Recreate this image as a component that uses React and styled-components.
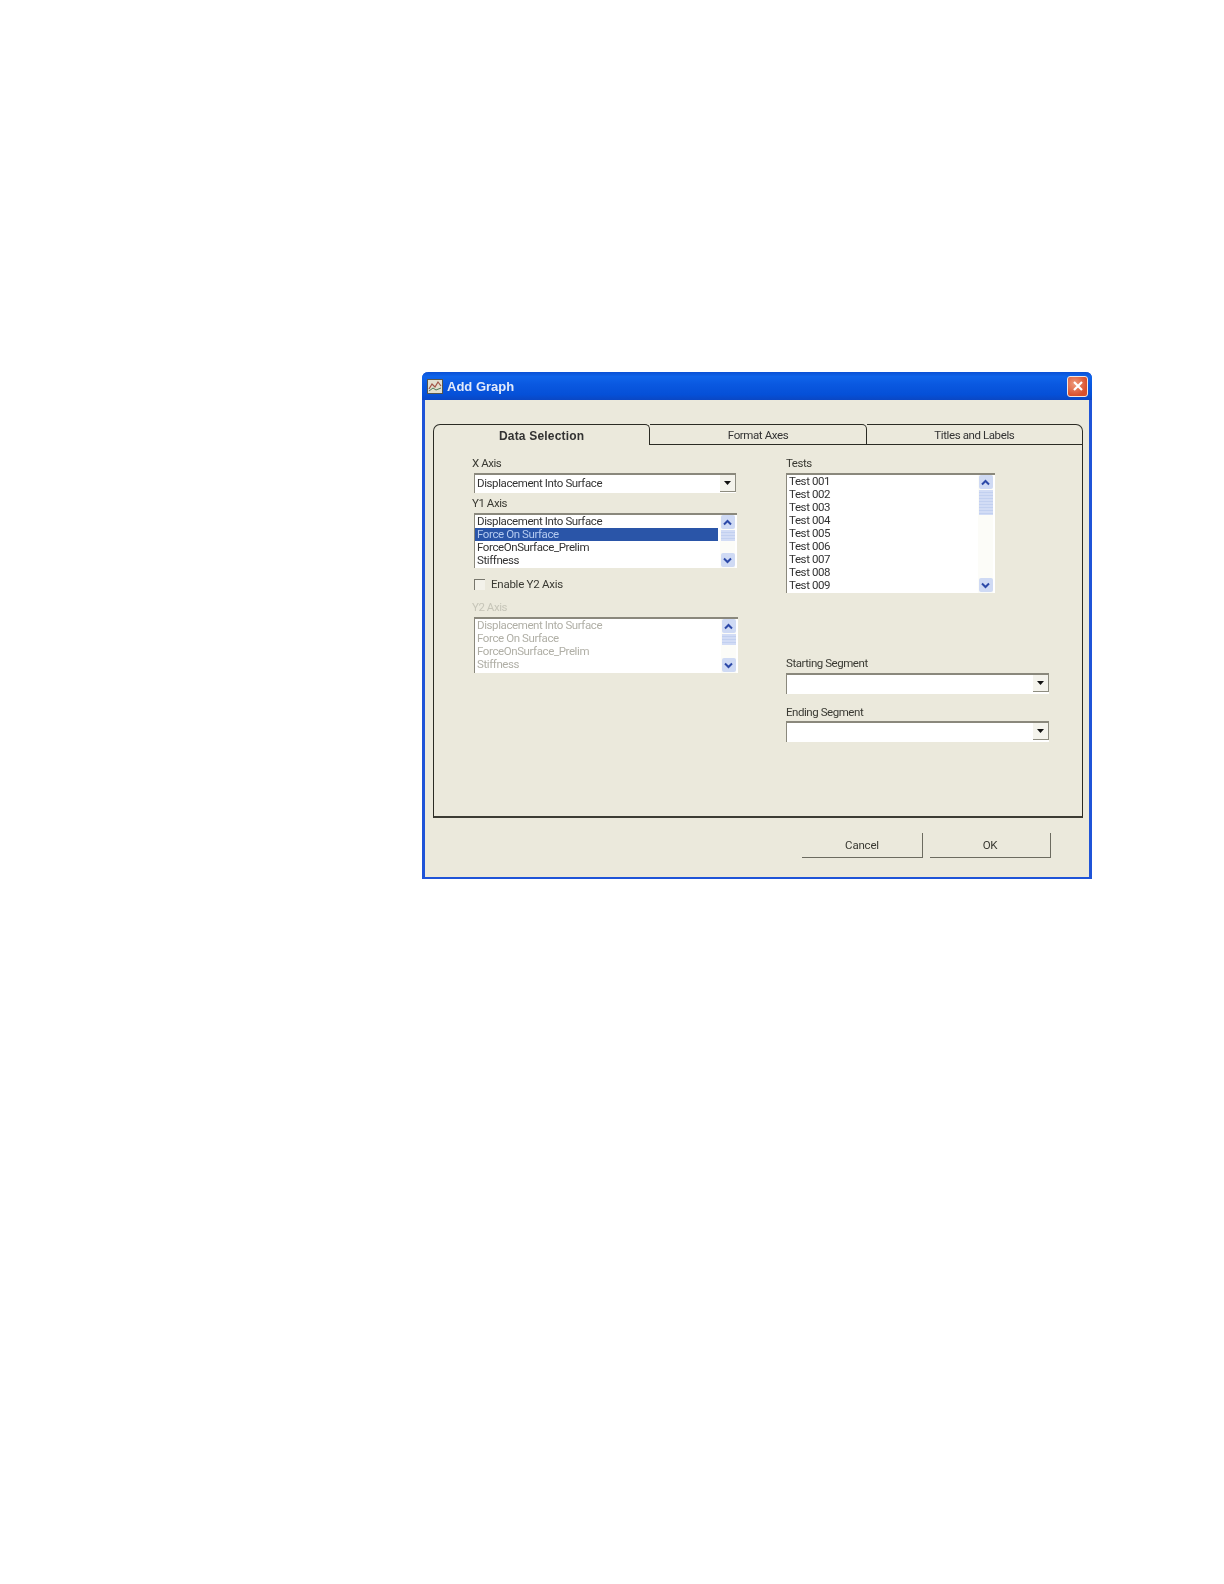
import React from 'react';
import styled, { createGlobalStyle } from 'styled-components';

const Global = createGlobalStyle`
  html, body {
    margin: 0;
    background: #fff;
  }
  body {
    font-family: Roboto, "Liberation Sans", Arial, sans-serif;
  }
`;

const Page = styled.div`
  width: 1224px;
  height: 1584px;
  padding: 372px 0 0 422px;
  box-sizing: border-box;
`;

const Window = styled.div`
  width: 670px;
  height: 507px;
  box-sizing: border-box;
  display: flex;
  flex-direction: column;
  background: #ebe9dc;
  border: solid #1f54d8;
  border-width: 0 3px 2px 3px;
  border-radius: 6px 6px 0 0;
  filter: blur(0.5px);
`;

const TitleBar = styled.div`
  height: 28px;
  margin: 0 -3px;
  flex: none;
  display: flex;
  align-items: center;
  padding: 0 4px 0 5px;
  border-radius: 6px 6px 0 0;
  background: linear-gradient(180deg, #0a50d4 0%, #0f64ea 16%, #0a58e0 45%, #0550d8 80%, #0a47c4 100%);
`;

const TitleText = styled.span`
  margin-left: 4px;
  color: #e2eafa;
  font-family: "Liberation Sans", Arial, sans-serif;
  font-size: 13px;
  font-weight: bold;
  flex: 1;
`;

const CloseButton = styled.div`
  width: 21px;
  height: 21px;
  box-sizing: border-box;
  border: 1px solid #f2e6e0;
  border-radius: 3px;
  background: radial-gradient(circle at 35% 35%, #ee9a7c, #d9502c 70%);
  display: flex;
  align-items: center;
  justify-content: center;
`;

const Body = styled.div`
  flex: 1;
  display: flex;
  flex-direction: column;
  padding: 24px 6px 0 8px;
`;

const TabStrip = styled.div`
  display: flex;
  height: 21px;
  flex: none;
`;

const Tab = styled.div`
  flex: 1;
  box-sizing: border-box;
  display: flex;
  align-items: center;
  justify-content: center;
  padding-top: ${p => (p.$active ? 2 : 0)}px;
  color: #333;
  font-family: ${p => (p.$active ? '"Liberation Sans", Arial, sans-serif' : 'inherit')};
  font-size: ${p => (p.$active ? 12 : 11.5)}px;
  font-weight: ${p => (p.$active ? 'bold' : 'normal')};
  letter-spacing: ${p => (p.$active ? 0.2 : -0.4)}px;
  border: 1px solid #2b2b24;
  border-bottom: ${p => (p.$active ? '0' : '1px solid #2b2b24')};
  border-left-width: ${p => (p.$first ? 1 : 0)}px;
  border-radius: ${p => (p.$first ? '7px' : 0)} ${p => (p.$last ? '7px' : '5px')} 0 0;
`;

const Panel = styled.div`
  height: 373px;
  box-sizing: border-box;
  display: grid;
  grid-template-columns: 314px 1fr;
  padding: 11px 0 0 38px;
  border: 1px solid #2b2b24;
  border-top: 0;
  border-bottom: 2px solid #3c3c34;
`;

const Column = styled.div`
  display: flex;
  flex-direction: column;
  align-items: flex-start;
`;

const Label = styled.div`
  height: 14px;
  line-height: 14px;
  margin-top: ${p => p.$top || 0}px;
  margin-bottom: ${p => p.$bottom ?? 3}px;
  font-size: 11.5px;
  letter-spacing: -0.45px;
  color: ${p => (p.$disabled ? '#c6c5b8' : '#3a3a33')};
`;

const Combo = styled.div`
  width: ${p => p.$width}px;
  height: ${p => p.$height || 20}px;
  margin-left: ${p => p.$inset || 0}px;
  box-sizing: border-box;
  display: flex;
  align-items: center;
  justify-content: space-between;
  padding: 0 0 2px 2px;
  background: #fff;
  border-top: 2px solid #8a887c;
  border-left: 1px solid #8a887c;
  font-size: 11.5px;
  letter-spacing: -0.4px;
  color: #333;
`;

const DropButton = styled.div`
  width: 15px;
  height: 16px;
  margin-left: auto;
  display: flex;
  align-items: center;
  justify-content: center;
  background: #f4f3ec;
  border-right: 1px solid #8d8c80;
  border-bottom: 1px solid #8d8c80;
`;

const ListBox = styled.div`
  width: ${p => p.$width}px;
  height: ${p => p.$height}px;
  margin-left: ${p => p.$inset || 0}px;
  box-sizing: border-box;
  display: flex;
  background: #fff;
  border-top: 2px solid #8a887c;
  border-left: 1px solid #8a887c;
  overflow: hidden;
`;

const Items = styled.div`
  flex: 1;
  min-width: 0;
`;

const Item = styled.div`
  height: 13px;
  line-height: 13px;
  padding-left: 2px;
  font-size: 11.5px;
  letter-spacing: -0.4px;
  white-space: nowrap;
  color: ${p => (p.$selected ? '#b4caf0' : p.$disabled ? '#b0afa6' : '#333')};
  background: ${p => (p.$selected ? '#2a55a8' : 'transparent')};
`;

const ScrollTrack = styled.div`
  width: 15px;
  margin: 0 2px 0 2px;
  flex: none;
  display: flex;
  flex-direction: column;
  align-items: center;
  padding: 0 0 1px;
  box-sizing: border-box;
  background: #fcfcf8;
`;

const ScrollButton = styled.div`
  width: 14px;
  height: 14px;
  flex: none;
  display: flex;
  align-items: center;
  justify-content: center;
  border-radius: 2px;
  background: #cfdaf4;
`;

const ScrollThumb = styled.div`
  width: 14px;
  height: ${p => p.$height}px;
  flex: none;
  margin-top: 1px;
  background: repeating-linear-gradient(180deg, #d2dcf5 0, #d2dcf5 2px, #c2d0f0 2px, #c2d0f0 3px);
`;

const ScrollSpace = styled.div`
  flex: 1;
`;

const CheckRow = styled.div`
  display: flex;
  align-items: center;
  margin: 9px 0 0 2px;
  height: 14px;
  font-size: 11.5px;
  letter-spacing: -0.25px;
  color: #3a3a33;
`;

const CheckBox = styled.div`
  width: 10px;
  height: 10px;
  margin-right: 6px;
  border-top: 1px solid #77766c;
  border-left: 1px solid #77766c;
  background: #f3f2ea;
`;

const Footer = styled.div`
  flex: 1;
  display: flex;
  justify-content: flex-end;
  align-items: flex-start;
  gap: 7px;
  padding: 15px 32px 0 0;
`;

const PushButton = styled.div`
  width: 121px;
  height: 25px;
  box-sizing: border-box;
  display: flex;
  align-items: center;
  justify-content: center;
  font-size: 11.5px;
  letter-spacing: -0.2px;
  color: #3a3a33;
  border-right: 1px solid #6c6b60;
  border-bottom: 1px solid #6c6b60;
`;

const Chevron = ({ up, color = '#2c49a8' }) => (
  <svg width="11" height="9" viewBox="0 0 11 9">
    <path
      d={up ? 'M2 6.5 L5.5 3 L9 6.5' : 'M2 2.5 L5.5 6 L9 2.5'}
      fill="none"
      stroke={color}
      strokeWidth="2"
    />
  </svg>
);

const Scroller = ({ thumb }) => (
  <ScrollTrack>
    <ScrollButton>
      <Chevron up />
    </ScrollButton>
    <ScrollThumb $height={thumb} />
    <ScrollSpace />
    <ScrollButton>
      <Chevron />
    </ScrollButton>
  </ScrollTrack>
);

const Dropdown = ({ children, width, height, inset }) => (
  <Combo $width={width} $height={height} $inset={inset}>
    {children && <span>{children}</span>}
    <DropButton>
      <svg width="7" height="4" viewBox="0 0 7 4">
        <path d="M0 0 H7 L3.5 4 Z" fill="#111" />
      </svg>
    </DropButton>
  </Combo>
);

const axes = ['Displacement Into Surface', 'Force On Surface', 'ForceOnSurface_Prelim', 'Stiffness'];
const tests = ['001', '002', '003', '004', '005', '006', '007', '008', '009'];

export default function App() {
  return (
    <Page>
      <Global />
      <Window>
        <TitleBar>
          <svg width="16" height="15" viewBox="0 0 16 15">
            <rect x="0.5" y="0.5" width="15" height="14" fill="#e2dfcf" stroke="#55554c" />
            <path d="M2 10 L5 5 L8 8 L11 3 L14 7" fill="none" stroke="#a05548" strokeWidth="1.2" />
            <path d="M2 12 L6 9 L9 11 L14 9" fill="none" stroke="#4f7a58" strokeWidth="1" />
          </svg>
          <TitleText>Add Graph</TitleText>
          <CloseButton>
            <svg width="12" height="12" viewBox="0 0 12 12">
              <path d="M2 2 L10 10 M10 2 L2 10" stroke="#fff" strokeWidth="2.2" />
            </svg>
          </CloseButton>
        </TitleBar>
        <Body>
          <TabStrip>
            <Tab $active $first>Data Selection</Tab>
            <Tab>Format Axes</Tab>
            <Tab $last>Titles and Labels</Tab>
          </TabStrip>
          <Panel>
            <Column>
              <Label>X Axis</Label>
              <Dropdown width={262} inset={2}>Displacement Into Surface</Dropdown>
              <Label $top={3} $bottom={3}>Y1 Axis</Label>
              <ListBox $width={263} $height={55} $inset={2}>
                <Items>
                  {axes.map(a => (
                    <Item key={a} $selected={a === 'Force On Surface'}>{a}</Item>
                  ))}
                </Items>
                <Scroller thumb={11} />
              </ListBox>
              <CheckRow>
                <CheckBox />
                Enable Y2 Axis
              </CheckRow>
              <Label $top={9} $bottom={3} $disabled>Y2 Axis</Label>
              <ListBox $width={264} $height={56} $inset={2}>
                <Items>
                  {axes.map(a => (
                    <Item key={a} $disabled>{a}</Item>
                  ))}
                </Items>
                <Scroller thumb={11} />
              </ListBox>
            </Column>
            <Column>
              <Label>Tests</Label>
              <ListBox $width={209} $height={120}>
                <Items>
                  {tests.map(t => (
                    <Item key={t}>Test {t}</Item>
                  ))}
                </Items>
                <Scroller thumb={25} />
              </ListBox>
              <Label $top={63} $bottom={3}>Starting Segment</Label>
              <Dropdown width={263} height={21} />
              <Label $top={11} $bottom={2}>Ending Segment</Label>
              <Dropdown width={263} height={21} />
            </Column>
          </Panel>
          <Footer>
            <PushButton>Cancel</PushButton>
            <PushButton>OK</PushButton>
          </Footer>
        </Body>
      </Window>
    </Page>
  );
}
